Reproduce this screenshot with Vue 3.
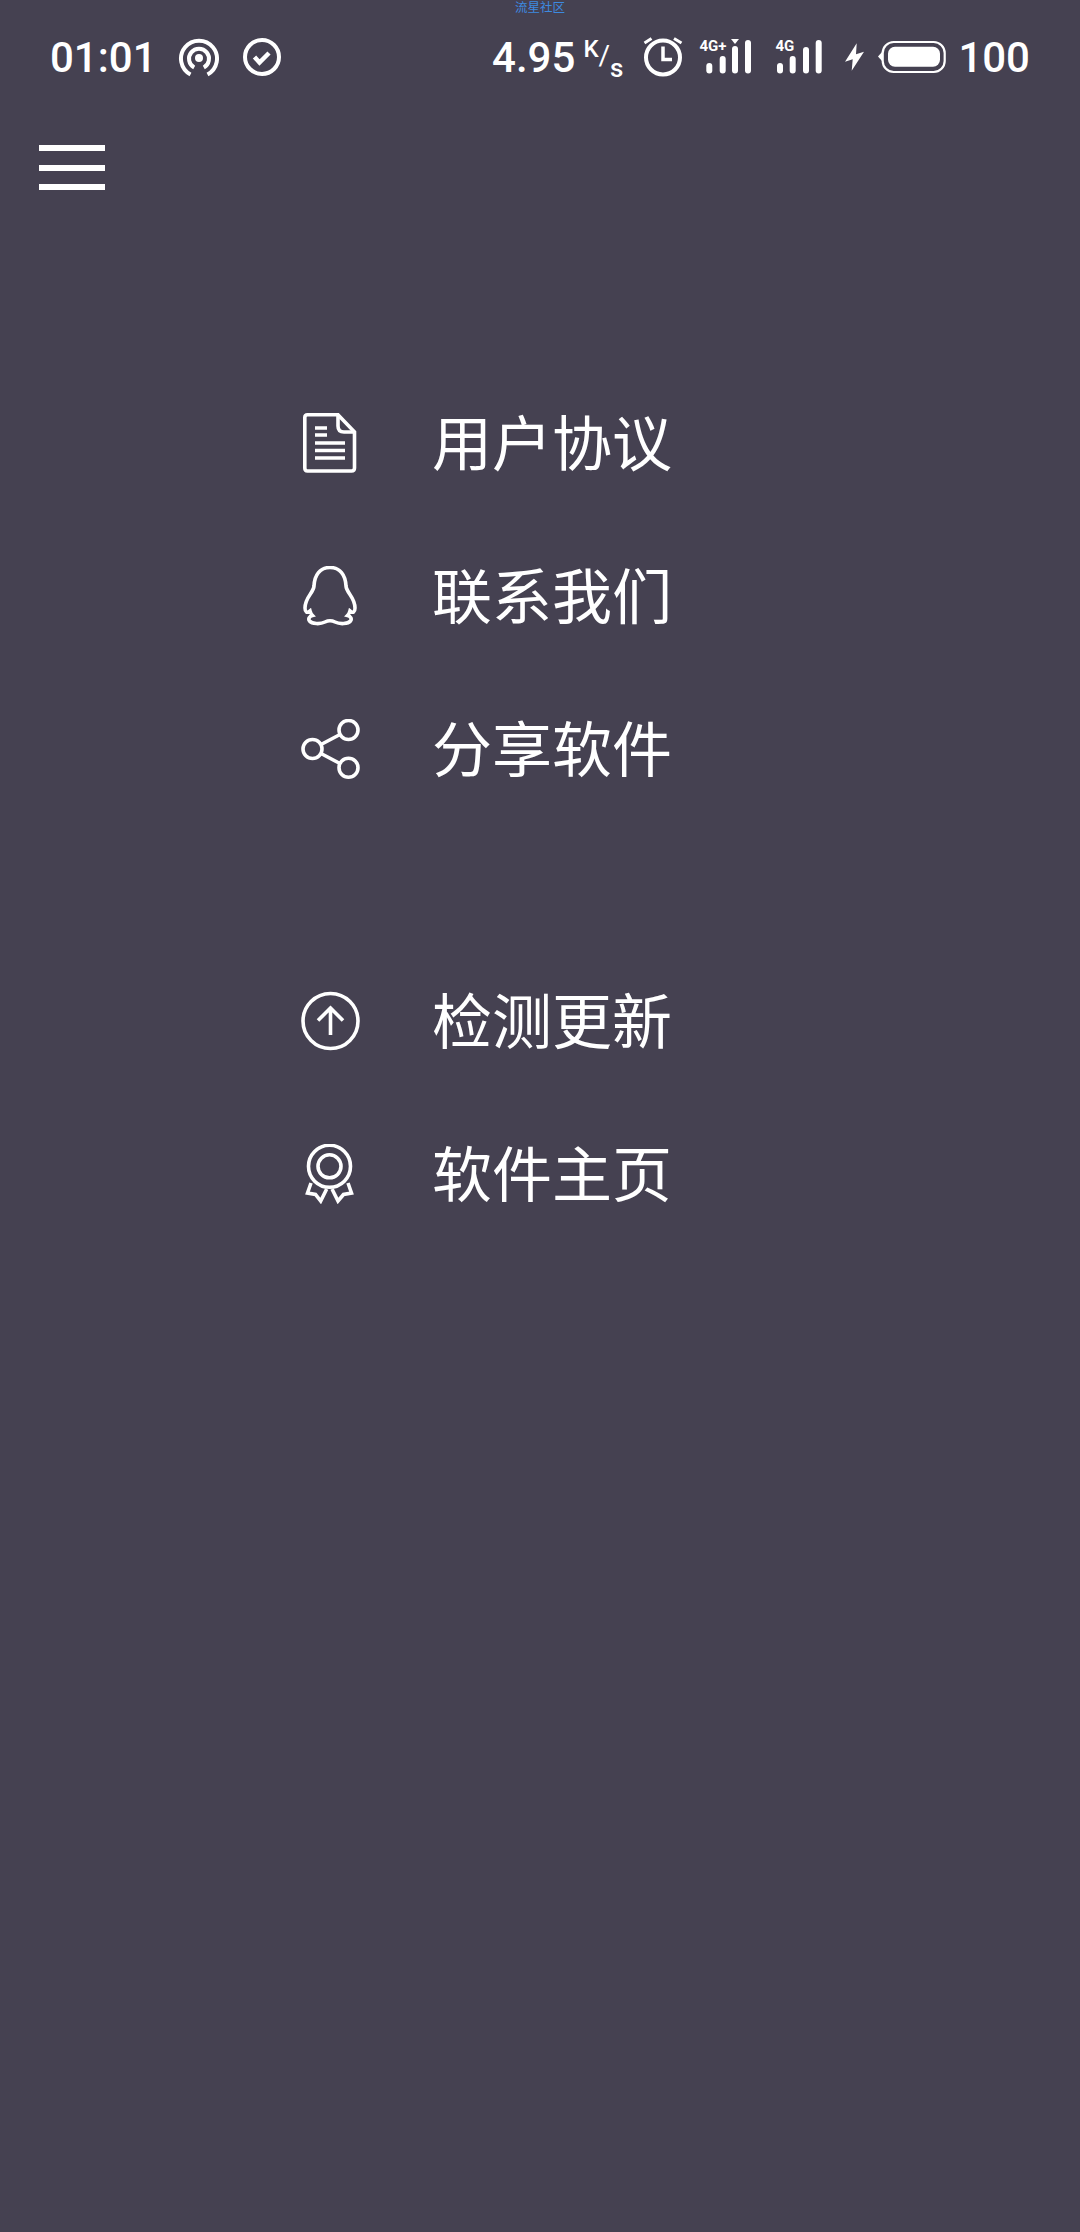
<template>
  <div class="page">
    <div class="watermark">流星社区</div>

    <div class="status">
      <span class="time">01:01</span>
      <svg class="radio" width="42" height="44" viewBox="178 36 42 44" fill="none" stroke="#fff" stroke-width="4">
        <path d="M190.5 74.5 A18 18 0 1 1 207.5 74.5" />
        <path d="M194.2 67.5 A10 10 0 1 1 203.8 67.5" />
        <circle cx="199" cy="58" r="4" fill="#fff" stroke="none" />
      </svg>
      <svg class="check" width="40" height="44" viewBox="243 36 40 44" fill="none" stroke="#fff" stroke-width="4">
        <circle cx="262" cy="57" r="17" />
        <path d="M254.5 57 L259.5 62.5 L269 53" stroke-width="4.5" />
      </svg>

      <span class="speed">4.95<span class="unit"><span class="k">K</span><span class="slash">/</span><span class="s">s</span></span></span>
      <svg class="alarm" width="42" height="44" viewBox="642 36 42 44" fill="none" stroke="#fff" stroke-width="4">
        <circle cx="663" cy="57.5" r="17" />
        <path d="M663 46.5 V59.5 H672" stroke-width="3.5" />
        <path d="M644.5 43 L651.5 38.5 M674 38.5 L681.5 43" stroke-width="3" />
      </svg>
      <svg class="signal1" width="58" height="44" viewBox="698 36 58 44" fill="#fff">
        <text x="699.5" y="51" class="net">4G+</text>
        <path d="M731 39 H739 L735 44 Z" />
        <rect x="706.3" y="63" width="6" height="10.5" rx="3" />
        <rect x="719.7" y="56" width="6" height="17.5" rx="3" />
        <rect x="732" y="46" width="6" height="27.5" rx="3" />
        <rect x="745" y="40" width="6" height="33.5" rx="3" />
      </svg>
      <svg class="signal2" width="50" height="44" viewBox="774 36 50 44" fill="#fff">
        <text x="775.5" y="51" class="net">4G</text>
        <rect x="777" y="63" width="6" height="10.5" rx="3" />
        <rect x="789.7" y="56" width="6" height="17.5" rx="3" />
        <rect x="803" y="47" width="6" height="26.5" rx="3" />
        <rect x="815.7" y="40" width="6" height="33.5" rx="3" />
      </svg>
      <svg class="bolt" width="22" height="44" viewBox="844 36 22 44" fill="#fff">
        <path d="M856.7 43.3 L845 61.7 L852.7 59.3 L851.7 70.7 L864 51.7 L856 54.3 Z" />
      </svg>
      <svg class="battery" width="72" height="44" viewBox="876 36 72 44">
        <path d="M882 52 L878 56.5 L882 61 Z" fill="#fff" />
        <rect x="882.7" y="42" width="62" height="30" rx="11" fill="none" stroke="#fff" stroke-width="2.2" />
        <rect x="888" y="46.7" width="52" height="20" rx="7" fill="#fff" />
      </svg>
      <span class="level">100</span>
    </div>

    <div class="menuBtn">
      <div class="bar"></div>
      <div class="bar"></div>
      <div class="bar"></div>
    </div>

    <div class="group first">
      <div class="row">
        <svg class="icon" viewBox="0 0 60 60">
          <path d="M6.5 1.8 H37 L53.5 19 V55 Q53.5 58 50.5 58 H6.5 Q3.8 58 3.8 55 V4.5 Q3.8 1.8 6.5 1.8 Z" />
          <path d="M37 2 V13 Q37 19 43 19 H53" />
          <path d="M14 15 H26 M14 22 H26 M14 30 H44 M14 37.5 H44 M14 45 H44" />
        </svg>
        <span class="label">用户协议</span>
      </div>
      <div class="row">
        <svg class="icon" viewBox="0 0 60 60">
          <path d="M29 1.5 C19 1.5 13.5 9 13 20 C12.5 27 4 31 4 42 C4 46 6 47.5 9 45 C9.5 47 10.5 48.5 11.5 49.5 C8 50.5 7 53 8.5 55 C11 58 19 58.5 24 56 C27 54.5 31 54.5 34 56 C39 58.5 47 58 49.5 55 C51 53 50 50.5 46.5 49.5 C47.5 48.5 48.5 47 49 45 C52 47.5 54 46 54 42 C54 31 45.5 27 45 20 C44.5 9 39 1.5 29 1.5 Z" />
        </svg>
        <span class="label">联系我们</span>
      </div>
      <div class="row">
        <svg class="icon" viewBox="0 0 60 60">
          <circle cx="47.5" cy="11" r="9.5" />
          <circle cx="11.5" cy="30" r="9.5" />
          <circle cx="47.5" cy="48.7" r="9.5" />
          <path d="M20 25.5 L39 15.5 M20 34.5 L39 44.5" />
        </svg>
        <span class="label">分享软件</span>
      </div>
    </div>

    <div class="group second">
      <div class="row">
        <svg class="icon" viewBox="0 0 60 60">
          <circle cx="29.5" cy="30" r="27.5" />
          <path d="M29.5 16 V44 M17 29.5 L29.5 17 L42 29.5" />
        </svg>
        <span class="label">检测更新</span>
      </div>
      <div class="row">
        <svg class="icon" viewBox="0 0 60 60">
          <circle cx="28.5" cy="22.3" r="21" />
          <circle cx="28.5" cy="22.3" r="11.5" />
          <path d="M10 39 L6.5 49 L14.5 50.5 L19.7 57 L25.7 45" />
          <path d="M47 39 L50.5 49 L42.5 50.5 L37 57 L31 45" />
        </svg>
        <span class="label">软件主页</span>
      </div>
    </div>
  </div>
</template>

<script setup>
</script>

<style scoped>
.page {
  position: relative;
  width: 1080px;
  min-height: 2232px;
  background-color: #454151;
  color: #fff;
  overflow: hidden;
  font-family: Roboto, "Noto Sans CJK SC", sans-serif;
}

.watermark {
  position: absolute;
  top: 0;
  left: 515px;
  font-family: "Noto Sans CJK SC", sans-serif;
  font-size: 12.5px;
  line-height: 14px;
  color: #3d8ae0;
}

.status {
  display: flex;
  align-items: center;
  height: 44px;
  padding: 36px 50px 0 50px;
}

.time,
.speed,
.level {
  font-size: 42px;
  line-height: 44px;
  font-weight: 500;
}

.time {
  width: 128px;
}

.check {
  margin-left: 23px;
}

.speed {
  margin-left: auto;
  display: flex;
  height: 44px;
  white-space: nowrap;
}

.unit {
  display: flex;
  margin-left: 8px;
  width: 40px;
  height: 44px;
  font-size: 20px;
  line-height: 22px;
}

.k {
  font-size: 24px;
  line-height: 26px;
}

.slash {
  font-size: 28px;
  line-height: 40px;
  font-weight: 400;
}

.s {
  font-size: 26px;
  line-height: 64px;
}

.alarm {
  margin-left: 19px;
}

.signal1 {
  margin-left: 14px;
}

.signal2 {
  margin-left: 18px;
}

.bolt {
  margin-left: 20px;
}

.battery {
  margin-left: 10px;
}

.level {
  margin-left: 10px;
}

.net {
  font-family: Roboto, sans-serif;
  font-size: 15px;
  font-weight: 700;
}

.menuBtn {
  display: flex;
  flex-direction: column;
  justify-content: space-between;
  width: 66px;
  height: 45px;
  margin: 65px 0 0 39px;
}

.bar {
  height: 6px;
  background-color: #fff;
}

.group {
  display: flex;
  flex-direction: column;
  gap: 93px;
  padding-left: 301px;
}

.first {
  margin-top: 223px;
}

.second {
  margin-top: 212px;
}

.row {
  display: flex;
  align-items: center;
  height: 60px;
}

.icon {
  width: 60px;
  height: 60px;
  fill: none;
  stroke: #fff;
  stroke-width: 3.6;
}

.label {
  margin-left: 71px;
  margin-bottom: 6px;
  font-family: "Noto Sans CJK SC", sans-serif;
  font-size: 60px;
  line-height: 60px;
  white-space: nowrap;
}
</style>
